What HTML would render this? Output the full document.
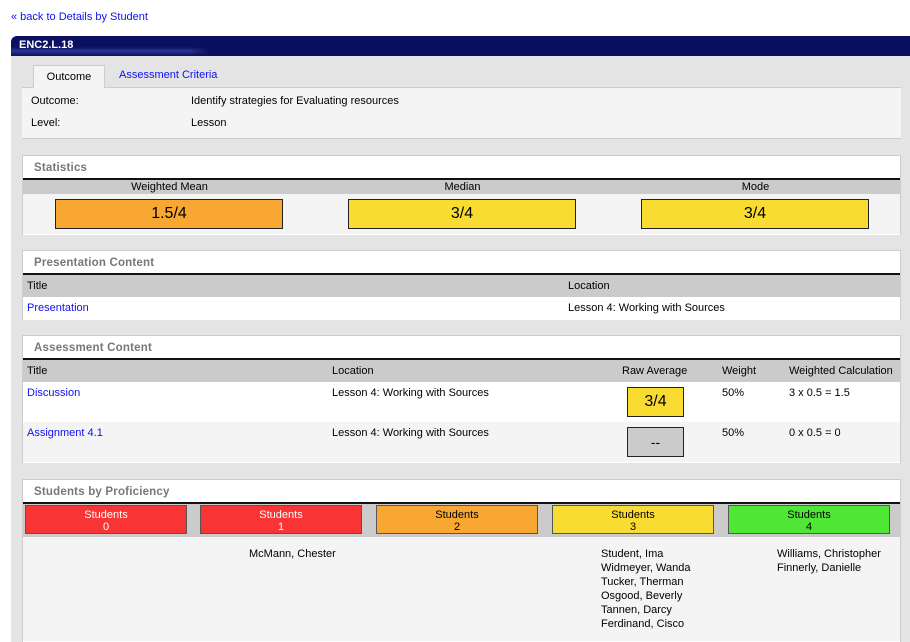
<!DOCTYPE html>
<html><head><style>
*{margin:0;padding:0;box-sizing:border-box}
body{width:910px;height:642px;overflow:hidden;background:#fff;font-family:"Liberation Sans",sans-serif;font-size:11px;color:#000;position:relative}
.a{position:absolute}
a,.lk{color:#1010ee;text-decoration:none}
.box{position:absolute;left:22px;width:879px;background:#fff;border:1px solid #ccc;border-bottom:none}
.hd{height:24px;border-bottom:2px solid #111;font-weight:bold;color:#777;font-size:11.5px;padding:6px 0 0 11px;letter-spacing:.2px}
.gr{background:#cbcbcb;position:relative}
.t{position:absolute;white-space:nowrap}
.v{position:absolute;border:1px solid #222;font-size:16px;text-align:center}
.sb{position:absolute;top:1px;height:29px;width:162px;border:1px solid #555;text-align:center;font-size:11px;line-height:12px;padding-top:3px}
</style></head><body>
<div class="a lk" style="left:11px;top:11px">« back to Details by Student</div>
<div class="a" style="left:11px;top:36px;width:899px;height:20px;border-radius:6px 0 0 0;background:linear-gradient(180deg,#0a0f60 0,#0a0f60 55%,#2a3490 75%,#0a0f60 100%);"></div>
<div class="a" style="left:11px;top:36px;width:899px;height:20px;border-radius:6px 0 0 0;background:linear-gradient(90deg,rgba(10,15,96,0) 0,rgba(10,15,96,0) 20%,#0a0f60 22%,#0a0f60 100%)"></div>
<div class="a" style="left:19px;top:39px;color:#fff;font-weight:bold;font-size:11px">ENC2.L.18</div>
<div class="a" style="left:11px;top:56px;width:899px;height:586px;background:#e4e4e4"></div>
<div class="a" style="left:33px;top:65px;width:72px;height:23px;background:#f4f4f4;border:1px solid #ccc;border-bottom:none;text-align:center;padding-top:5px;z-index:2">Outcome</div>
<div class="a lk" style="left:119px;top:69px">Assessment Criteria</div>
<div class="a" style="left:22px;top:87px;width:879px;height:52px;background:#f4f4f4;border-top:1px solid #ccc;border-bottom:1px solid #ccc"></div>
<div class="a" style="left:31px;top:95px">Outcome:</div>
<div class="a" style="left:191px;top:95px">Identify strategies for Evaluating resources</div>
<div class="a" style="left:31px;top:117px">Level:</div>
<div class="a" style="left:191px;top:117px">Lesson</div>

<div class="box" style="top:155px;height:80px">
<div class="hd">Statistics</div>
<div class="gr" style="height:14px"><span class="t" style="left:0;width:293px;text-align:center;top:1px">Weighted Mean</span><span class="t" style="left:293px;width:293px;text-align:center;top:1px">Median</span><span class="t" style="left:586px;width:293px;text-align:center;top:1px">Mode</span></div>
<div style="background:#f4f4f4;height:40px;position:relative">
<div class="v" style="left:32px;top:5px;width:228px;height:30px;line-height:28px;background:#f8a832">1.5/4</div>
<div class="v" style="left:325px;top:5px;width:228px;height:30px;line-height:28px;background:#f9dc32">3/4</div>
<div class="v" style="left:618px;top:5px;width:228px;height:30px;line-height:28px;background:#f9dc32">3/4</div>
</div></div>

<div class="box" style="top:250px;height:70px">
<div class="hd">Presentation Content</div>
<div class="gr" style="height:22px"><span class="t" style="left:4px;top:5px">Title</span><span class="t" style="left:545px;top:5px">Location</span></div>
<div style="height:22px;position:relative"><span class="t lk" style="left:4px;top:5px">Presentation</span><span class="t" style="left:545px;top:5px">Lesson 4: Working with Sources</span></div>
</div>

<div class="box" style="top:335px;height:128px">
<div class="hd">Assessment Content</div>
<div class="gr" style="height:22px"><span class="t" style="left:4px;top:5px">Title</span><span class="t" style="left:309px;top:5px">Location</span><span class="t" style="left:599px;top:5px">Raw Average</span><span class="t" style="left:699px;top:5px">Weight</span><span class="t" style="left:766px;top:5px">Weighted Calculation</span></div>
<div style="height:40px;position:relative;background:#fff"><span class="t lk" style="left:4px;top:5px">Discussion</span><span class="t" style="left:309px;top:5px">Lesson 4: Working with Sources</span>
<div class="v" style="left:604px;top:5px;width:57px;height:30px;line-height:28px;background:#f9dc32">3/4</div><span class="t" style="left:699px;top:5px">50%</span><span class="t" style="left:766px;top:5px">3 x 0.5 = 1.5</span></div>
<div style="height:40px;position:relative;background:#f4f4f4"><span class="t lk" style="left:4px;top:5px">Assignment 4.1</span><span class="t" style="left:309px;top:5px">Lesson 4: Working with Sources</span>
<div class="v" style="left:604px;top:5px;width:57px;height:30px;line-height:28px;background:#cbcbcb;font-size:14px">--</div><span class="t" style="left:699px;top:5px">50%</span><span class="t" style="left:766px;top:5px">0 x 0.5 = 0</span></div>
</div>

<div class="box" style="top:479px;height:163px">
<div class="hd">Students by Proficiency</div>
<div class="gr" style="height:33px">
<div class="sb" style="left:2px;background:#f93434;color:#fff">Students<br>0</div>
<div class="sb" style="left:177px;background:#f93434;color:#fff">Students<br>1</div>
<div class="sb" style="left:353px;background:#f8a832">Students<br>2</div>
<div class="sb" style="left:529px;background:#f9dc32">Students<br>3</div>
<div class="sb" style="left:705px;background:#50e636">Students<br>4</div>
</div>
<div style="background:#f4f4f4;height:104px;position:relative;line-height:14px">
<span class="t" style="left:226px;top:10px">McMann, Chester</span>
<span class="t" style="left:578px;top:10px">Student, Ima<br>Widmeyer, Wanda<br>Tucker, Therman<br>Osgood, Beverly<br>Tannen, Darcy<br>Ferdinand, Cisco</span>
<span class="t" style="left:754px;top:10px">Williams, Christopher<br>Finnerly, Danielle</span>
</div></div>
</body></html>
